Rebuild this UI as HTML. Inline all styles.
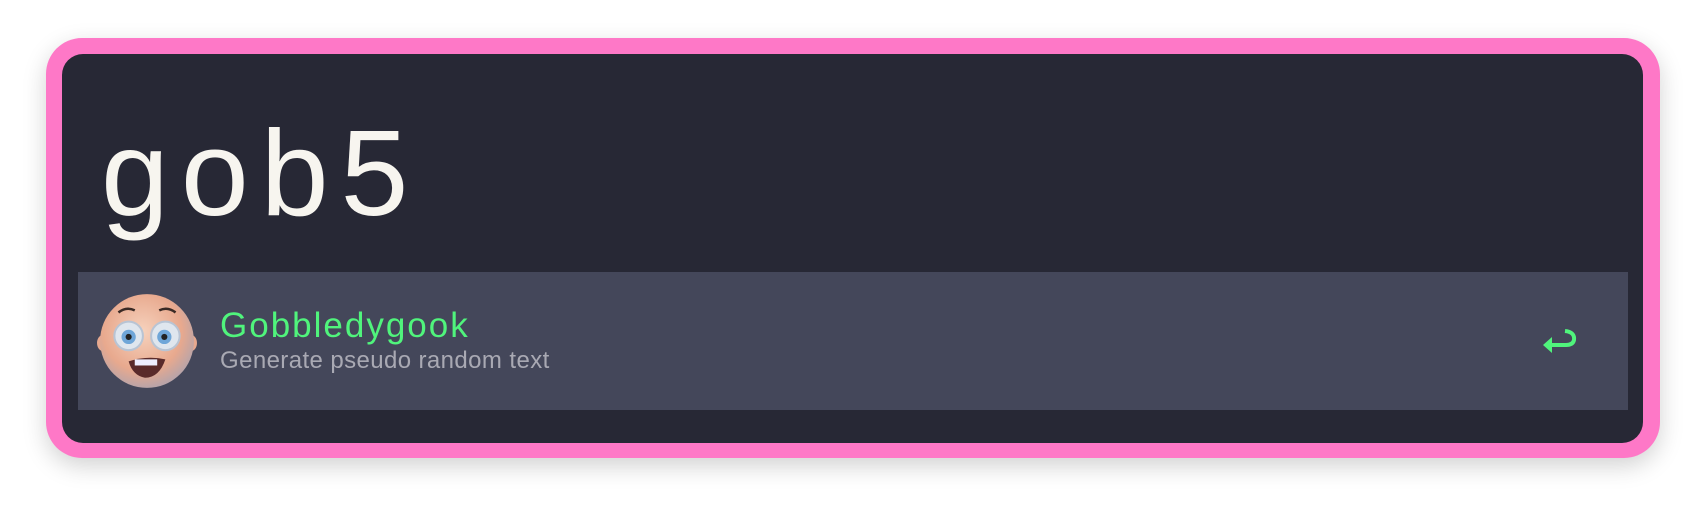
<!DOCTYPE html>
<html><head><style>
body{margin:0;width:1706px;height:512px;background:#fff;overflow:hidden;font-family:"Liberation Sans",sans-serif;}
.outer{position:absolute;left:46px;top:38px;width:1614px;height:420px;background:#fe78c7;border-radius:36px;box-shadow:0 8px 24px rgba(0,0,0,0.18);}
.inner{position:absolute;left:62px;top:54px;width:1581px;height:389px;background:#272835;border-radius:21px;}
.q{position:absolute;left:101px;top:103px;font-size:122px;color:#f7f5ef;line-height:140px;letter-spacing:12px;}
.row{position:absolute;left:78px;top:272px;width:1550px;height:138px;background:#44475a;}
.t{position:absolute;left:220px;top:306px;font-size:35px;color:#50f47c;line-height:40px;letter-spacing:2px;}
.s{position:absolute;left:220px;top:346px;font-size:24px;color:#a9a9b3;line-height:30px;letter-spacing:0.4px;}
</style></head><body>
<div class="outer"></div><div class="inner"></div>
<div class="q">gob5</div>
<div class="row"></div>
<svg style="position:absolute;left:94px;top:290px" width="106" height="102" viewBox="0 0 100 100">
<defs><radialGradient id="f" cx="45%" cy="40%" r="60%"><stop offset="0" stop-color="#f6d2bd"/><stop offset="0.7" stop-color="#e8a98e"/><stop offset="1" stop-color="#b9a4a8"/></radialGradient></defs>
<ellipse cx="7" cy="52" rx="6" ry="8" fill="#e7a98f"/><ellipse cx="93" cy="52" rx="6" ry="8" fill="#e7a98f"/>
<circle cx="50" cy="50" r="46" fill="url(#f)"/>
<path d="M22 22 Q30 16 38 20 M62 20 Q70 16 78 22" stroke="#3a2a25" stroke-width="2.5" fill="none"/>
<circle cx="32" cy="45" r="14" fill="#dfe6ee" stroke="#b8c4d4" stroke-width="2"/><circle cx="32" cy="46" r="7" fill="#6fa6d8"/><circle cx="32" cy="46" r="3" fill="#222"/>
<circle cx="68" cy="45" r="14" fill="#dfe6ee" stroke="#b8c4d4" stroke-width="2"/><circle cx="67" cy="46" r="7" fill="#6fa6d8"/><circle cx="67" cy="46" r="3" fill="#222"/>
<path d="M32 70 Q50 64 68 68 Q62 86 48 86 Q36 84 32 70Z" fill="#5a2a2a"/><rect x="38" y="68" width="22" height="6" fill="#eef" />
</svg>
<div class="t">Gobbledygook</div>
<div class="s">Generate pseudo random text</div>
<svg style="position:absolute;left:1541px;top:328px" width="40" height="30" viewBox="0 0 40 30">
<path d="M24 3 Q34 4 33 12 Q32 17 25 17 L10 17" stroke="#50f47c" stroke-width="4" fill="none"/>
<path d="M2 17 L11 9 L11 25Z" fill="#50f47c"/>
</svg>
</body></html>
